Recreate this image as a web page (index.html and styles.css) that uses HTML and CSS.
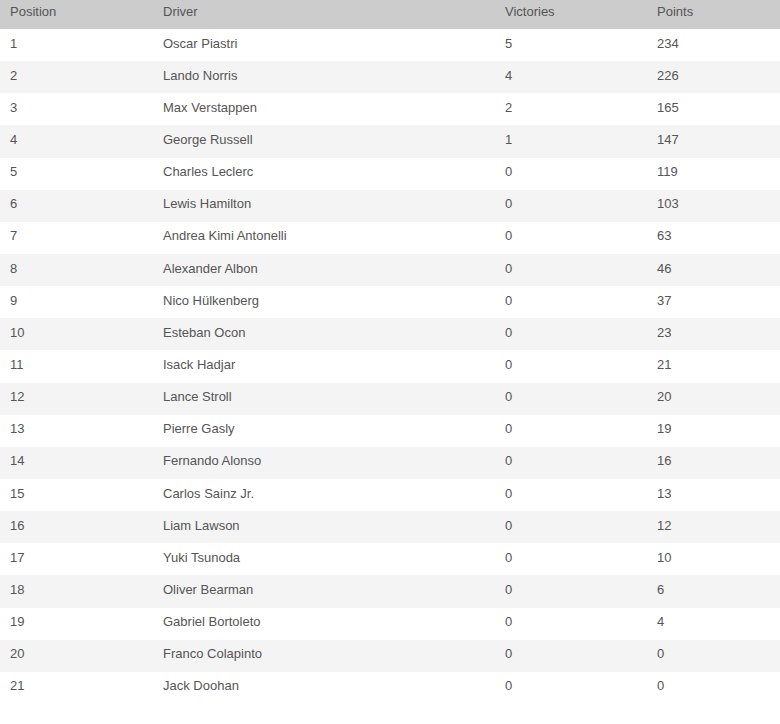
FILE: index.html
```html
<!DOCTYPE html>
<html>
<head>
<meta charset="utf-8">
<link rel="stylesheet" href="styles.css">
</head>
<body>
<table class="standings">
<thead>
<tr><th class="c-pos">Position</th><th class="c-drv">Driver</th><th class="c-win">Victories</th><th class="c-pts">Points</th></tr>
</thead>
<tbody>
<tr><td>1</td><td>Oscar Piastri</td><td>5</td><td>234</td></tr>
<tr><td>2</td><td>Lando Norris</td><td>4</td><td>226</td></tr>
<tr><td>3</td><td>Max Verstappen</td><td>2</td><td>165</td></tr>
<tr><td>4</td><td>George Russell</td><td>1</td><td>147</td></tr>
<tr><td>5</td><td>Charles Leclerc</td><td>0</td><td>119</td></tr>
<tr><td>6</td><td>Lewis Hamilton</td><td>0</td><td>103</td></tr>
<tr><td>7</td><td>Andrea Kimi Antonelli</td><td>0</td><td>63</td></tr>
<tr><td>8</td><td>Alexander Albon</td><td>0</td><td>46</td></tr>
<tr><td>9</td><td>Nico Hülkenberg</td><td>0</td><td>37</td></tr>
<tr><td>10</td><td>Esteban Ocon</td><td>0</td><td>23</td></tr>
<tr><td>11</td><td>Isack Hadjar</td><td>0</td><td>21</td></tr>
<tr><td>12</td><td>Lance Stroll</td><td>0</td><td>20</td></tr>
<tr><td>13</td><td>Pierre Gasly</td><td>0</td><td>19</td></tr>
<tr><td>14</td><td>Fernando Alonso</td><td>0</td><td>16</td></tr>
<tr><td>15</td><td>Carlos Sainz Jr.</td><td>0</td><td>13</td></tr>
<tr><td>16</td><td>Liam Lawson</td><td>0</td><td>12</td></tr>
<tr><td>17</td><td>Yuki Tsunoda</td><td>0</td><td>10</td></tr>
<tr><td>18</td><td>Oliver Bearman</td><td>0</td><td>6</td></tr>
<tr><td>19</td><td>Gabriel Bortoleto</td><td>0</td><td>4</td></tr>
<tr><td>20</td><td>Franco Colapinto</td><td>0</td><td>0</td></tr>
<tr><td>21</td><td>Jack Doohan</td><td>0</td><td>0</td></tr>
</tbody>
</table>
</body>
</html>
```
FILE: styles.css
```css
html, body {
  margin: 0;
  padding: 0;
  background: #fff;
}
.standings {
  width: 780px;
  border-collapse: collapse;
  table-layout: fixed;
  font-family: "Liberation Sans", Arial, sans-serif;
  font-size: 13px;
  color: #555;
}
.standings th {
  background: #cccccc;
  font-weight: normal;
  text-align: left;
  height: 29px;
  padding: 0 0 6px 10px;
  box-sizing: border-box;
  color: #555;
}
.standings td {
  height: 32.15px;
  padding: 0 0 4px 10px;
  box-sizing: border-box;
  vertical-align: middle;
}
.standings tbody tr:nth-child(even) td {
  background: #f4f4f4;
}
.c-pos { width: 153px; }
.c-drv { width: 342px; }
.c-win { width: 152px; }
.c-pts { width: 133px; }
```
